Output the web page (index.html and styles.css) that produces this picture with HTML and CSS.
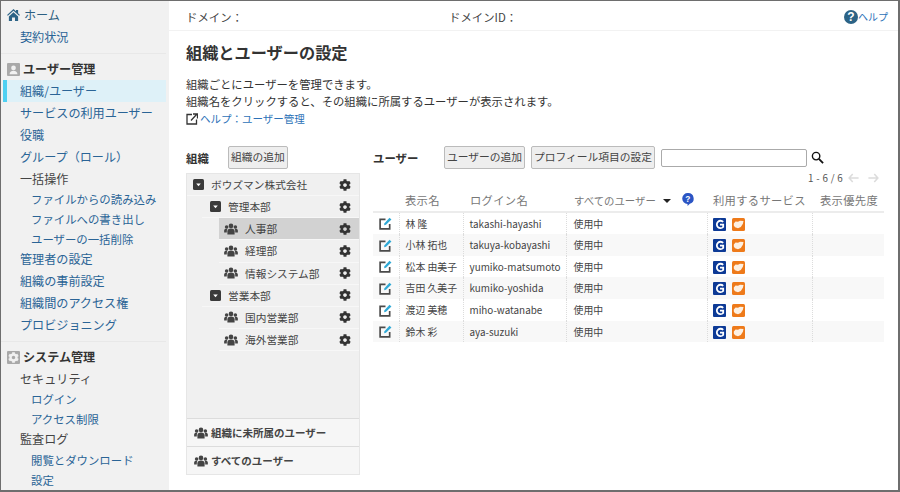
FILE: index.html
```html
<!DOCTYPE html>
<html lang="ja">
<head>
<meta charset="utf-8">
<title>組織とユーザーの設定</title>
<link rel="stylesheet" href="styles.css">
</head>
<body>
<svg class="defs" width="0" height="0">
  <defs>
    <symbol id="gear" viewBox="0 0 512 512"><path d="M487.400 315.700l-42.600-24.600c4.300-23.200 4.300-47 0-70.200l42.600-24.600c4.900-2.800 7.100-8.600 5.500-14-11.100-35.600-30-67.800-54.700-94.600-3.800-4.100-10-5.100-14.800-2.300L380.800 110c-17.900-15.400-38.500-27.300-60.800-35.100V25.800c0-5.600-3.900-10.500-9.400-11.700-36.700-8.200-74.300-7.800-109.200 0-5.500 1.200-9.400 6.100-9.400 11.700V75c-22.200 7.900-42.800 19.800-60.800 35.100L88.700 85.500c-4.900-2.800-11-1.900-14.800 2.300-24.700 26.700-43.600 58.900-54.700 94.600-1.700 5.400.6 11.200 5.500 14L67.300 221c-4.300 23.200-4.300 47 0 70.200l-42.600 24.600c-4.900 2.800-7.100 8.600-5.500 14 11.100 35.600 30 67.800 54.700 94.600 3.800 4.100 10 5.100 14.800 2.300l42.600-24.600c17.900 15.400 38.500 27.300 60.800 35.100v49.200c0 5.600 3.900 10.500 9.400 11.700 36.700 8.200 74.300 7.800 109.200 0 5.500-1.200 9.400-6.100 9.400-11.700v-49.200c22.200-7.900 42.800-19.800 60.800-35.100l42.600 24.600c4.900 2.800 11 1.900 14.800-2.300 24.700-26.700 43.600-58.900 54.700-94.600 1.500-5.500-.7-11.300-5.600-14.100zM256 336c-44.100 0-80-35.900-80-80s35.900-80 80-80 80 35.900 80 80-35.900 80-80 80z"/></symbol>
    <symbol id="people" viewBox="0 0 16 14"><circle cx="8" cy="3.400" r="2.700"/><circle cx="2.900" cy="4.600" r="2.100"/><circle cx="13.100" cy="4.600" r="2.100"/><path d="M3.800 13.500V9.500C3.800 7.500 5.300 6.500 8 6.500s4.200 1 4.200 3.200v3.800z"/><path d="M0 11V8.700c0-1.200 1-2 2.900-2 .4 0 .7 0 1 .1-.5.600-.8 1.400-.8 2.400V11zM16 11V8.700c0-1.200-1-2-2.900-2-.4 0-.7 0-1 .1.500.6.800 1.400.8 2.400V11z"/></symbol>
    <symbol id="edit" viewBox="0 0 14 14"><path d="M7 2.500H1.200v10.300h10.300V7.500" fill="none" stroke="#4a4a4a" stroke-width="1.800"/><path d="M5.500 8.800l.4-2L11.300.8l2.100 2L7.500 8.400z" fill="#2fa9d6"/></symbol>
    <symbol id="svc-g" viewBox="0 0 13 13"><rect width="13" height="13" rx="1" fill="#0d3a96"/><path d="M10.200 3.900A3.700 3.700 0 1 0 10.200 9V6.700H7" fill="none" stroke="#fff" stroke-width="1.800"/></symbol>
    <symbol id="svc-o" viewBox="0 0 13 13"><rect width="13" height="13" rx="1.500" fill="#ee7a1a"/><path d="M1.800 5.500L3.500 3.600 6 3.800 8 2.800l3.500.2-.6 2.700L8.800 9 6 10.200 3 9.300 1.800 7.500z" fill="#fdf0e2"/></symbol>
    <symbol id="caret-box" viewBox="0 0 11 11"><rect width="11" height="11" rx="1.500" fill="#3a3a3a"/><path d="M3.200 4.500h4.600L5.500 7.200z" fill="#fff"/></symbol>
  </defs>
</svg>
<div class="frame">
  <nav class="side">
    <a class="nav home"><svg class="ic-home" viewBox="0 0 14 13"><path d="M7 0l2.700 2.400V1H12v3.500L14 6.400l-.9.900L7 2 .9 7.300 0 6.400zM2 8l5-4.400L12 8v5H8.600V9.300H5.400V13H2z"/></svg>ホーム</a>
    <a class="nav">契約状況</a>
    <hr class="rule">
    <div class="nav head"><span class="badge"><svg viewBox="0 0 14 14"><circle cx="7" cy="5" r="3"/><path d="M2 13c0-3 2-4.500 5-4.500s5 1.500 5 4.500z"/></svg></span>ユーザー管理</div>
    <a class="nav active">組織/ユーザー</a>
    <a class="nav">サービスの利用ユーザー</a>
    <a class="nav">役職</a>
    <a class="nav">グループ（ロール）</a>
    <div class="nav plain">一括操作</div>
    <div class="subs">
      <a class="nav sub">ファイルからの読み込み</a>
      <a class="nav sub">ファイルへの書き出し</a>
      <a class="nav sub">ユーザーの一括削除</a>
    </div>
    <a class="nav">管理者の設定</a>
    <a class="nav">組織の事前設定</a>
    <a class="nav">組織間のアクセス権</a>
    <a class="nav">プロビジョニング</a>
    <hr class="rule">
    <div class="nav head"><span class="badge"><svg viewBox="0 0 512 512"><use href="#gear"/></svg></span>システム管理</div>
    <div class="nav plain">セキュリティ</div>
    <div class="subs">
      <a class="nav sub">ログイン</a>
      <a class="nav sub">アクセス制限</a>
    </div>
    <div class="nav plain">監査ログ</div>
    <div class="subs">
      <a class="nav sub">閲覧とダウンロード</a>
      <a class="nav sub">設定</a>
    </div>
  </nav>
  <main class="main">
    <header class="topbar">
      <span class="domain">ドメイン：</span>
      <span class="domain-id">ドメインID：</span>
      <a class="help"><svg class="ic-help" viewBox="0 0 14 14"><circle cx="7" cy="7" r="7" fill="#2c6386"/><text x="7" y="11" text-anchor="middle" class="help-q">?</text></svg>ヘルプ</a>
    </header>
    <div class="content">
      <h1 class="title">組織とユーザーの設定</h1>
      <p class="desc">組織ごとにユーザーを管理できます。<br>組織名をクリックすると、その組織に所属するユーザーが表示されます。</p>
      <a class="help-link"><svg class="ic-ext" viewBox="0 0 12 12"><path d="M6 1.500H1v9.500h9.500V6.500" fill="none" stroke="#333" stroke-width="1.300"/><path d="M5 7.500L10.500 1.500M7 1h4.500v4.500" fill="none" stroke="#333" stroke-width="1.300"/></svg>ヘルプ：ユーザー管理</a>
      <div class="panels">
        <section class="org">
          <div class="org-head"><h2 class="sec">組織</h2><button class="btn">組織の追加</button></div>
          <div class="tree">
            <div class="tree-list">
              <div class="row l0"><svg class="caret"><use href="#caret-box"/></svg><span class="name">ボウズマン株式会社</span><svg class="gear"><use href="#gear"/></svg></div>
              <div class="row l1"><svg class="caret"><use href="#caret-box"/></svg><span class="name">管理本部</span><svg class="gear"><use href="#gear"/></svg></div>
              <div class="row l2 selected"><svg class="ppl"><use href="#people"/></svg><span class="name">人事部</span><svg class="gear"><use href="#gear"/></svg></div>
              <div class="row l2"><svg class="ppl"><use href="#people"/></svg><span class="name">経理部</span><svg class="gear"><use href="#gear"/></svg></div>
              <div class="row l2"><svg class="ppl"><use href="#people"/></svg><span class="name">情報システム部</span><svg class="gear"><use href="#gear"/></svg></div>
              <div class="row l1"><svg class="caret"><use href="#caret-box"/></svg><span class="name">営業本部</span><svg class="gear"><use href="#gear"/></svg></div>
              <div class="row l2"><svg class="ppl"><use href="#people"/></svg><span class="name">国内営業部</span><svg class="gear"><use href="#gear"/></svg></div>
              <div class="row l2"><svg class="ppl"><use href="#people"/></svg><span class="name">海外営業部</span><svg class="gear"><use href="#gear"/></svg></div>
            </div>
            <div class="tree-foot"><svg class="ppl"><use href="#people"/></svg>組織に未所属のユーザー</div>
            <div class="tree-foot"><svg class="ppl"><use href="#people"/></svg>すべてのユーザー</div>
          </div>
        </section>
        <section class="users">
          <div class="users-head">
            <h2 class="sec users-title">ユーザー</h2>
            <button class="btn">ユーザーの追加</button>
            <button class="btn">プロフィール項目の設定</button>
            <input class="search" type="text" aria-label="検索">
            <svg class="ic-search" viewBox="0 0 14 14"><circle cx="5.500" cy="5.500" r="4" fill="none" stroke="#111" stroke-width="1.500"/><path d="M8.500 8.500L13 13" stroke="#111" stroke-width="2"/></svg>
          </div>
          <div class="pager"><span class="count">1 - 6 / 6</span><svg class="arrow" viewBox="0 0 14 12"><path d="M6 1L1.500 6 6 11M1.500 6H13.500" fill="none" stroke="#dcdcdc" stroke-width="2"/></svg><svg class="arrow" viewBox="0 0 14 12"><path d="M8 1l4.500 5L8 11M12.500 6H.5" fill="none" stroke="#dcdcdc" stroke-width="2"/></svg></div>
          <table class="table">
            <thead>
              <tr>
                <th class="c-edit"></th>
                <th class="c-name">表示名</th>
                <th class="c-login">ログイン名</th>
                <th class="c-status"><span class="narrow">すべてのユーザー</span><span class="tri"></span><svg class="ic-q" viewBox="0 0 13 14"><path d="M6.500 0a6 6 0 0 1 2 11.700L6 14v-2A6 6 0 0 1 6.500 0z" fill="#2b55c4"/><text x="6.500" y="9.500" text-anchor="middle" class="q-mark">?</text></svg></th>
                <th class="c-svc">利用するサービス</th>
                <th class="c-prio">表示優先度</th>
              </tr>
            </thead>
            <tbody>
              <tr><td class="c-edit"><svg class="ic-edit"><use href="#edit"/></svg></td><td class="c-name">林 隆</td><td class="c-login">takashi-hayashi</td><td>使用中</td><td class="c-svc"><svg class="svc"><use href="#svc-g"/></svg><svg class="svc"><use href="#svc-o"/></svg></td><td></td></tr>
              <tr><td class="c-edit"><svg class="ic-edit"><use href="#edit"/></svg></td><td class="c-name">小林 拓也</td><td class="c-login">takuya-kobayashi</td><td>使用中</td><td class="c-svc"><svg class="svc"><use href="#svc-g"/></svg><svg class="svc"><use href="#svc-o"/></svg></td><td></td></tr>
              <tr><td class="c-edit"><svg class="ic-edit"><use href="#edit"/></svg></td><td class="c-name">松本 由美子</td><td class="c-login">yumiko-matsumoto</td><td>使用中</td><td class="c-svc"><svg class="svc"><use href="#svc-g"/></svg><svg class="svc"><use href="#svc-o"/></svg></td><td></td></tr>
              <tr><td class="c-edit"><svg class="ic-edit"><use href="#edit"/></svg></td><td class="c-name">吉田 久美子</td><td class="c-login">kumiko-yoshida</td><td>使用中</td><td class="c-svc"><svg class="svc"><use href="#svc-g"/></svg><svg class="svc"><use href="#svc-o"/></svg></td><td></td></tr>
              <tr><td class="c-edit"><svg class="ic-edit"><use href="#edit"/></svg></td><td class="c-name">渡辺 美穂</td><td class="c-login">miho-watanabe</td><td>使用中</td><td class="c-svc"><svg class="svc"><use href="#svc-g"/></svg><svg class="svc"><use href="#svc-o"/></svg></td><td></td></tr>
              <tr><td class="c-edit"><svg class="ic-edit"><use href="#edit"/></svg></td><td class="c-name">鈴木 彩</td><td class="c-login">aya-suzuki</td><td>使用中</td><td class="c-svc"><svg class="svc"><use href="#svc-g"/></svg><svg class="svc"><use href="#svc-o"/></svg></td><td></td></tr>
            </tbody>
          </table>
        </section>
      </div>
    </div>
  </main>
</div>
</body>
</html>
```
FILE: styles.css
```css
* { box-sizing: border-box; }
html, body { margin: 0; padding: 0; height: 100%; overflow: hidden; }
body { font-family: "Noto Sans CJK JP", "Noto Sans", sans-serif; color: #333; background: #fff; }
.defs { position: absolute; }
.frame { width: 900px; height: 492px; border: 1px solid #6e6e6e; border-width: 1px 2px 2px 1px; display: flex; overflow: hidden; }

.side { width: 168px; flex: none; background: #f1f1f1; padding-top: 3px; padding-right: 3px; font-size: 12.100px; }
.nav { display: flex; align-items: center; height: 22px; padding-left: 19px; color: #2a6496; white-space: nowrap; line-height: 22px; }
.home { padding-left: 6px; color: #2c5f82; }
.ic-home { width: 13px; height: 12px; fill: #2c6386; margin-right: 4px; }
.rule { border: 0; border-top: 1px solid #e8e8e8; margin: 5px 0 4px; height: 0; }
.head { padding-left: 6px; font-weight: 700; color: #333; }
.badge { width: 13px; height: 13px; background: #a9a9a9; margin-right: 3px; display: flex; align-items: center; justify-content: center; border-radius: 1px; }
.badge svg { width: 11px; height: 11px; fill: #f1f1f1; }
.active { background: #def1f8; margin-left: 2px; border-left: 4px solid #4fd0f2; padding-left: 13px; }
.plain { color: #444; }
.subs { margin: -1px 0; }
.subs:last-child { margin: 0; }
.sub { height: 20px; line-height: 20px; padding-left: 30px; font-size: 11.400px; }

.main { flex: 1; min-width: 0; display: flex; flex-direction: column; }
.topbar { height: 30px; flex: none; display: flex; align-items: center; padding: 2px 10px 0 17px; font-size: 11.400px; color: #444; border-bottom: 1px solid #f2f2f2; }
.domain { width: 263px; }
.domain-id { flex: 1; }
.help { display: flex; align-items: center; color: #2d72b8; font-size: 10px; }
.ic-help { width: 14px; height: 14px; }
.help-q { font: 700 12px "Liberation Sans", sans-serif; fill: #fff; }

.content { padding: 0 15px 0 17px; flex: 1; }
.title { margin: 9px 0 0; font-size: 16.200px; font-weight: 700; line-height: 24px; color: #333; }
.desc { margin: 12px 0 0; font-size: 11.350px; line-height: 17px; color: #333; }
.help-link { display: flex; align-items: center; font-size: 10.500px; line-height: 17px; color: #2d72b8; }
.ic-ext { width: 12px; height: 12px; margin-right: 2px; }

.panels { display: flex; margin-top: 18px; }
.org { width: 174px; flex: none; margin-right: 13px; }
.org-head { display: flex; align-items: center; height: 25px; margin-bottom: 3px; }
.sec { margin: 0; font-size: 11.400px; font-weight: 700; color: #333; width: 42px; flex: none; }
.btn { height: 23px; padding: 0 2px; font: 10.750px "Noto Sans CJK JP", sans-serif; color: #444; background: #eee; border: 1px solid #bbb; border-radius: 2px; line-height: 1; white-space: nowrap; }
.tree { height: 302px; background: #f0f0f0; border: 1px solid #e6e6e6; display: flex; flex-direction: column; }
.tree-list { flex: 1; }
.row { height: 22.150px; display: flex; align-items: center; font-size: 10.700px; color: #444; border-bottom: 1px solid #f7f7f7; padding-right: 8px; }
.l0 { padding-left: 6px; }
.l1 { margin-left: 15px; padding-left: 8px; }
.l2 { margin-left: 32px; padding-left: 5px; }
.selected { background: #d2d2d2; }
.caret { width: 11px; height: 11px; flex: none; margin-right: 7px; }
.ppl { width: 14px; height: 12px; flex: none; fill: #444; margin-right: 7px; }
.name { flex: 1; white-space: nowrap; }
.gear { width: 12px; height: 12px; fill: #333; flex: none; }
.tree-foot { height: 28px; display: flex; align-items: center; padding-left: 7px; font-size: 10.500px; font-weight: 700; color: #444; background: #f6f6f6; border-top: 1px solid #dcdcdc; }
.tree-foot .ppl { margin-right: 3px; }

.users { flex: 1; min-width: 0; }
.users-head { display: flex; align-items: center; height: 25px; gap: 6px; }
.users-title { width: 65px; }
.search { width: 146px; height: 18px; border: 1px solid #aaa; border-radius: 2px; padding: 0; background: #fff; }
.ic-search { width: 13px; height: 13px; margin-left: -2px; }
.pager { display: flex; align-items: center; justify-content: flex-end; height: 16px; font-size: 9.800px; color: #555; letter-spacing: .3px; padding-right: 4px; gap: 9px; }
.count { margin-right: -4px; }
.arrow { width: 11px; height: 10px; }
.table { width: 511px; border-collapse: collapse; table-layout: fixed; font-size: 9.900px; color: #444; margin-top: 2px; }
.table th { height: 24px; font-weight: 400; text-align: left; font-size: 11.300px; color: #777; letter-spacing: .3px; padding: 0 0 0 7px; white-space: nowrap; border-bottom: 2px solid #ececec; }
.table td { height: 22px; padding: 0 0 0 7px; border-left: 1px dotted #dcdcdc; white-space: nowrap; }
.table tbody tr:nth-child(3n) td { height: 21px; }
.table tbody tr:nth-child(odd) td { background: #fff; }
.table tbody tr:nth-child(even) td { background: #f8f8f8; }
.table td.c-edit { border-left: 0; padding: 0 0 0 6px; }
.table td.c-name, .table td.c-login { padding-left: 6px; }
.table td.c-svc { padding-left: 5px; }
.table th.c-edit { width: 26px; }
.table th.c-name { width: 64px; padding-left: 6px; }
.table th.c-login { width: 103px; }
.table th.c-status { width: 141px; padding-left: 8px; }
.table th.c-svc { width: 105px; padding-left: 6px; }
.table th.c-prio { width: 72px; padding-left: 8px; }
.narrow { font-size: 10.400px; letter-spacing: 0; }
.tri { display: inline-block; width: 0; height: 0; border: 4px solid transparent; border-top: 4px solid #222; border-bottom: 0; margin-left: 7px; vertical-align: 2px; }
.ic-q { width: 12px; height: 13px; margin-left: 11px; vertical-align: -1px; }
.q-mark { font: 700 9px "Liberation Sans", sans-serif; fill: #fff; }
.ic-edit { width: 13px; height: 13px; display: block; }
.svc { width: 13px; height: 13px; margin-right: 6px; vertical-align: middle; }
```
